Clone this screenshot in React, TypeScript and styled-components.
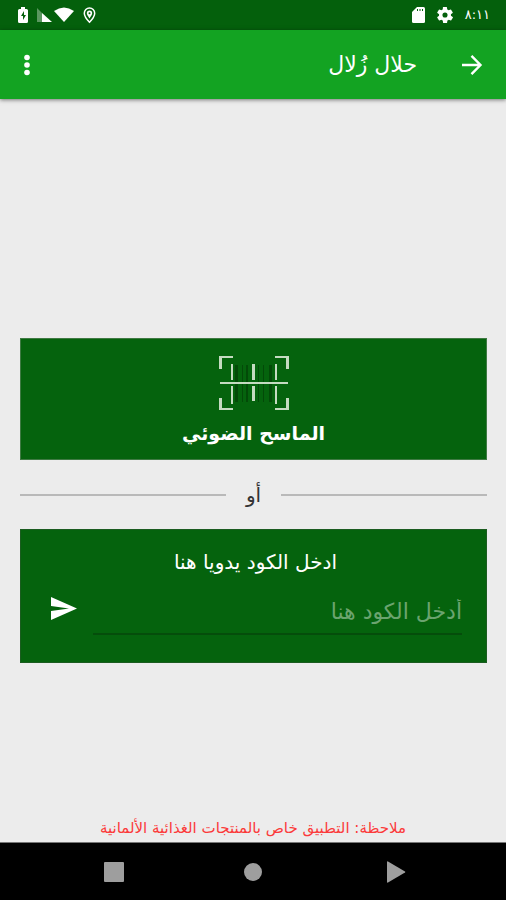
import React, { useState } from "react";
import styled, { createGlobalStyle } from "styled-components";

const GlobalStyle = createGlobalStyle`
  *, *::before, *::after { box-sizing: border-box; }
  body { margin: 0; background: #ececec; }
  button, input { font: inherit; color: inherit; border: 0; background: none; padding: 0; margin: 0; }
  button { cursor: pointer; }
  svg { display: block; }
`;

const Screen = styled.div`
  min-height: 100vh;
  display: flex;
  flex-direction: column;
  background: #ececec;
  font-family: "DejaVu Sans", sans-serif;
`;

const StatusBar = styled.div`
  height: 30px;
  flex: none;
  padding: 0 16px;
  display: flex;
  align-items: center;
  justify-content: space-between;
  background: #04600c;
  color: #fff;
`;

const StatusGroup = styled.div`
  display: flex;
  align-items: center;
  gap: 12px;
`;

const Clock = styled.time`
  font-size: 13px;
  line-height: 16px;
`;

const AppBar = styled.header`
  height: 69px;
  flex: none;
  padding: 0 20px;
  display: flex;
  align-items: center;
  background: #13a322;
  color: #fff;
  box-shadow: 0 1px 4px rgba(0, 0, 0, 0.5);
`;

const Title = styled.h1`
  flex: 1;
  margin: 0 41px 0 0;
  font-size: 22px;
  line-height: 32px;
  font-weight: 400;
`;

const IconButton = styled.button<{ $width: number }>`
  width: ${(p) => p.$width}px;
  height: 36px;
  flex: none;
  display: grid;
  place-items: center;
`;

const Content = styled.main`
  flex: 1;
  padding: 86px 19px 0 20px;
  display: flex;
  flex-direction: column;
  justify-content: center;
`;

const ScanButton = styled.button`
  height: 122px;
  padding: 6px 16px 0;
  display: flex;
  flex-direction: column;
  align-items: center;
  justify-content: center;
  gap: 6px;
  background: #05630d;
  border: 1px solid #3f7a43;
  color: #fff;
  font-size: 19px;
  line-height: 32px;
  font-weight: 700;
`;

const Divider = styled.div`
  height: 69px;
  display: flex;
  align-items: center;
  gap: 20px;
  color: #333;
  font-size: 20px;
  line-height: 28px;

  &::before,
  &::after {
    content: "";
    flex: 1;
    height: 2px;
    background: #b9b9b9;
  }
`;

const EntryCard = styled.form`
  height: 134px;
  padding: 16px 24px 16px 28px;
  background: #05630d;
  border: 1px solid #1b5c20;
  color: #fff;
`;

const EntryLabel = styled.label`
  display: block;
  text-align: center;
  font-size: 20px;
  line-height: 32px;
`;

const EntryRow = styled.div`
  margin-top: 12px;
  display: flex;
  align-items: flex-start;
  gap: 14px;
`;

const CodeInput = styled.input`
  flex: 1;
  min-width: 0;
  height: 45px;
  border-bottom: 2px solid #054d0b;
  font-size: 22px;
  line-height: 40px;
  outline: none;

  &::placeholder { color: #6ba46f; opacity: 1; line-height: 40px; }
`;

const Note = styled.p`
  flex: none;
  margin: 0;
  padding: 0 16px 2px;
  text-align: center;
  color: #fb3a3a;
  font-size: 15px;
  line-height: 24px;
`;

const NavBar = styled.nav`
  height: 58px;
  flex: none;
  padding: 0 100px;
  display: flex;
  align-items: center;
  justify-content: space-between;
  background: #000;
  border-top: 1px solid #777;
`;

const ScanIcon = () => (
  <svg width="70" height="56" viewBox="0 0 70 56" aria-hidden="true">
    <path
      d="M16 10h3v37h-3zM23 10h1v37h-1zM27 10h2v37h-2zM39 10h1v37h-1zM44 10h1v37h-1zM50 10h3v37h-3z"
      fill="#034a08"
    />
    <g fill="#c5dbc1">
      <path d="M0 1h14v2H3v11H0zM56 1h14v13h-3V3H56zM0 43h3v10h11v2H0zM67 43h3v12H56v-2h11z" />
      <path d="M12 9h2v16h-2zM12 31h2v18h-2zM33 9h3v16h-3zM33 31h3v15h-3zM56 9h2v16h-2zM56 31h2v18h-2z" />
      <path d="M1 27h68v2H1z" />
    </g>
  </svg>
);

export default function App() {
  const [code, setCode] = useState("");
  return (
    <Screen dir="rtl" lang="ar">
      <GlobalStyle />
      <StatusBar>
        <StatusGroup>
          <Clock>٨:١١</Clock>
          <svg width="16" height="16" viewBox="2 2 20 20" fill="#fff" aria-hidden="true">
            <path d="M19.4 13a7.5 7.5 0 0 0 0-2l2.1-1.6a.5.5 0 0 0 .1-.7l-2-3.4a.5.5 0 0 0-.6-.2l-2.5 1a7.3 7.3 0 0 0-1.7-1l-.4-2.7a.5.5 0 0 0-.5-.4h-4a.5.5 0 0 0-.5.4L9.2 5.100a7.300 7.300 0 0 0-1.700 1L5 5.100a.5.5 0 0 0-.6.2l-2 3.400a.5.5 0 0 0 .1.700L4.600 11a7.500 7.500 0 0 0 0 2l-2.100 1.600a.5.5 0 0 0-.1.700l2 3.400c.1.200.4.300.6.200l2.500-1a7.300 7.300 0 0 0 1.700 1l.4 2.700c0 .2.2.4.5.4h4c.3 0 .5-.2.5-.4l.4-2.700a7.300 7.300 0 0 0 1.700-1l2.500 1c.2.100.5 0 .6-.2l2-3.400a.5.5 0 0 0-.1-.700zM12 15.200a3.200 3.200 0 1 1 0-6.400 3.200 3.200 0 0 1 0 6.400z" />
          </svg>
          <svg width="13" height="16" viewBox="0 0 13 16" aria-hidden="true">
            <path d="M5 0h6.500Q13 0 13 1.500v13q0 1.500-1.500 1.500h-10Q0 16 0 14.500V5z" fill="#fff" />
            <path d="M5 2h1v2H5zM7.500 2h1v2h-1zM10 2h1v2h-1z" fill="#04600c" />
          </svg>
        </StatusGroup>
        <StatusGroup dir="ltr">
          <svg width="80" height="18" viewBox="0 0 80 18" aria-hidden="true">
            <path d="M5 1h4v2h1.500Q12 3 12 4.500v11q0 1.500-1.500 1.500h-7Q2 17 2 15.500v-11Q2 3 3.500 3H5z" fill="#fff" />
            <path d="M8 5 5 10h2v4l3-5H8z" fill="#04600c" />
            <path d="M21 2v14h5V7z" fill="#fff" opacity=".35" />
            <path d="M26 7v9h10z" fill="#fff" />
            <path d="M38 5Q48-2 58 5L48 16z" fill="#fff" />
            <path d="M73.500 2a5.200 5.200 0 0 0-5.200 5.200c0 3.700 5.200 9 5.200 9s5.200-5.300 5.200-9A5.200 5.200 0 0 0 73.500 2z" fill="none" stroke="#fff" strokeWidth="1.500" />
            <path d="M73.500 4.500a2.700 2.700 0 0 1 2.700 2.700c0 1.700-1.200 2.300-2.700 5.300-1.500-3-2.700-3.600-2.700-5.300a2.700 2.700 0 0 1 2.700-2.700z" fill="#fff" />
            <circle cx="73.500" cy="7.200" r="1" fill="#04600c" />
          </svg>
        </StatusGroup>
      </StatusBar>

      <AppBar>
        <IconButton $width={28} type="button" aria-label="رجوع">
          <svg width="22" height="22" viewBox="0 0 22 22" fill="none" stroke="#fff" strokeWidth="2.400" aria-hidden="true">
            <path d="M1 11h18M10.500 1.800 19.500 11l-9 9.200" />
          </svg>
        </IconButton>
        <Title>حلال زُلال</Title>
        <IconButton $width={14} type="button" aria-label="المزيد">
          <svg width="6" height="22" viewBox="0 0 6 22" fill="#fff" aria-hidden="true">
            <circle cx="3" cy="3.500" r="2.800" />
            <circle cx="3" cy="11" r="2.800" />
            <circle cx="3" cy="18.500" r="2.800" />
          </svg>
        </IconButton>
      </AppBar>

      <Content>
        <ScanButton type="button">
          <ScanIcon />
          <span>الماسح الضوئي</span>
        </ScanButton>
        <Divider>أو</Divider>
        <EntryCard onSubmit={(e) => e.preventDefault()}>
          <EntryLabel htmlFor="code">ادخل الكود يدويا هنا</EntryLabel>
          <EntryRow>
            <CodeInput
              id="code"
              placeholder="أدخل الكود هنا"
              value={code}
              onChange={(e) => setCode(e.target.value)}
            />
            <IconButton $width={30} type="submit" aria-label="إرسال">
              <svg width="26" height="23" viewBox="0 0 26 23" fill="#fff" aria-hidden="true">
                <path d="M0 0v9l18 2.500L0 14v9l26-11.500z" />
              </svg>
            </IconButton>
          </EntryRow>
        </EntryCard>
      </Content>

      <Note>ملاحظة: التطبيق خاص بالمنتجات الغذائية الألمانية</Note>

      <NavBar dir="ltr">
        <IconButton $width={28} type="button" aria-label="التطبيقات الأخيرة">
          <svg width="20" height="20" viewBox="0 0 20 20" fill="#9e9e9e" aria-hidden="true">
            <rect width="20" height="20" rx="1" />
          </svg>
        </IconButton>
        <IconButton $width={28} type="button" aria-label="الرئيسية">
          <svg width="18" height="18" viewBox="0 0 18 18" fill="#9e9e9e" aria-hidden="true">
            <circle cx="9" cy="9" r="9" />
          </svg>
        </IconButton>
        <IconButton $width={28} type="button" aria-label="السابق">
          <svg width="28" height="22" viewBox="0 0 28 22" fill="#9e9e9e" aria-hidden="true">
            <path d="M9 1q0-1 1-.6l17 10q.8.6 0 1.200L10 21.600Q9 22 9 21z" />
          </svg>
        </IconButton>
      </NavBar>
    </Screen>
  );
}
